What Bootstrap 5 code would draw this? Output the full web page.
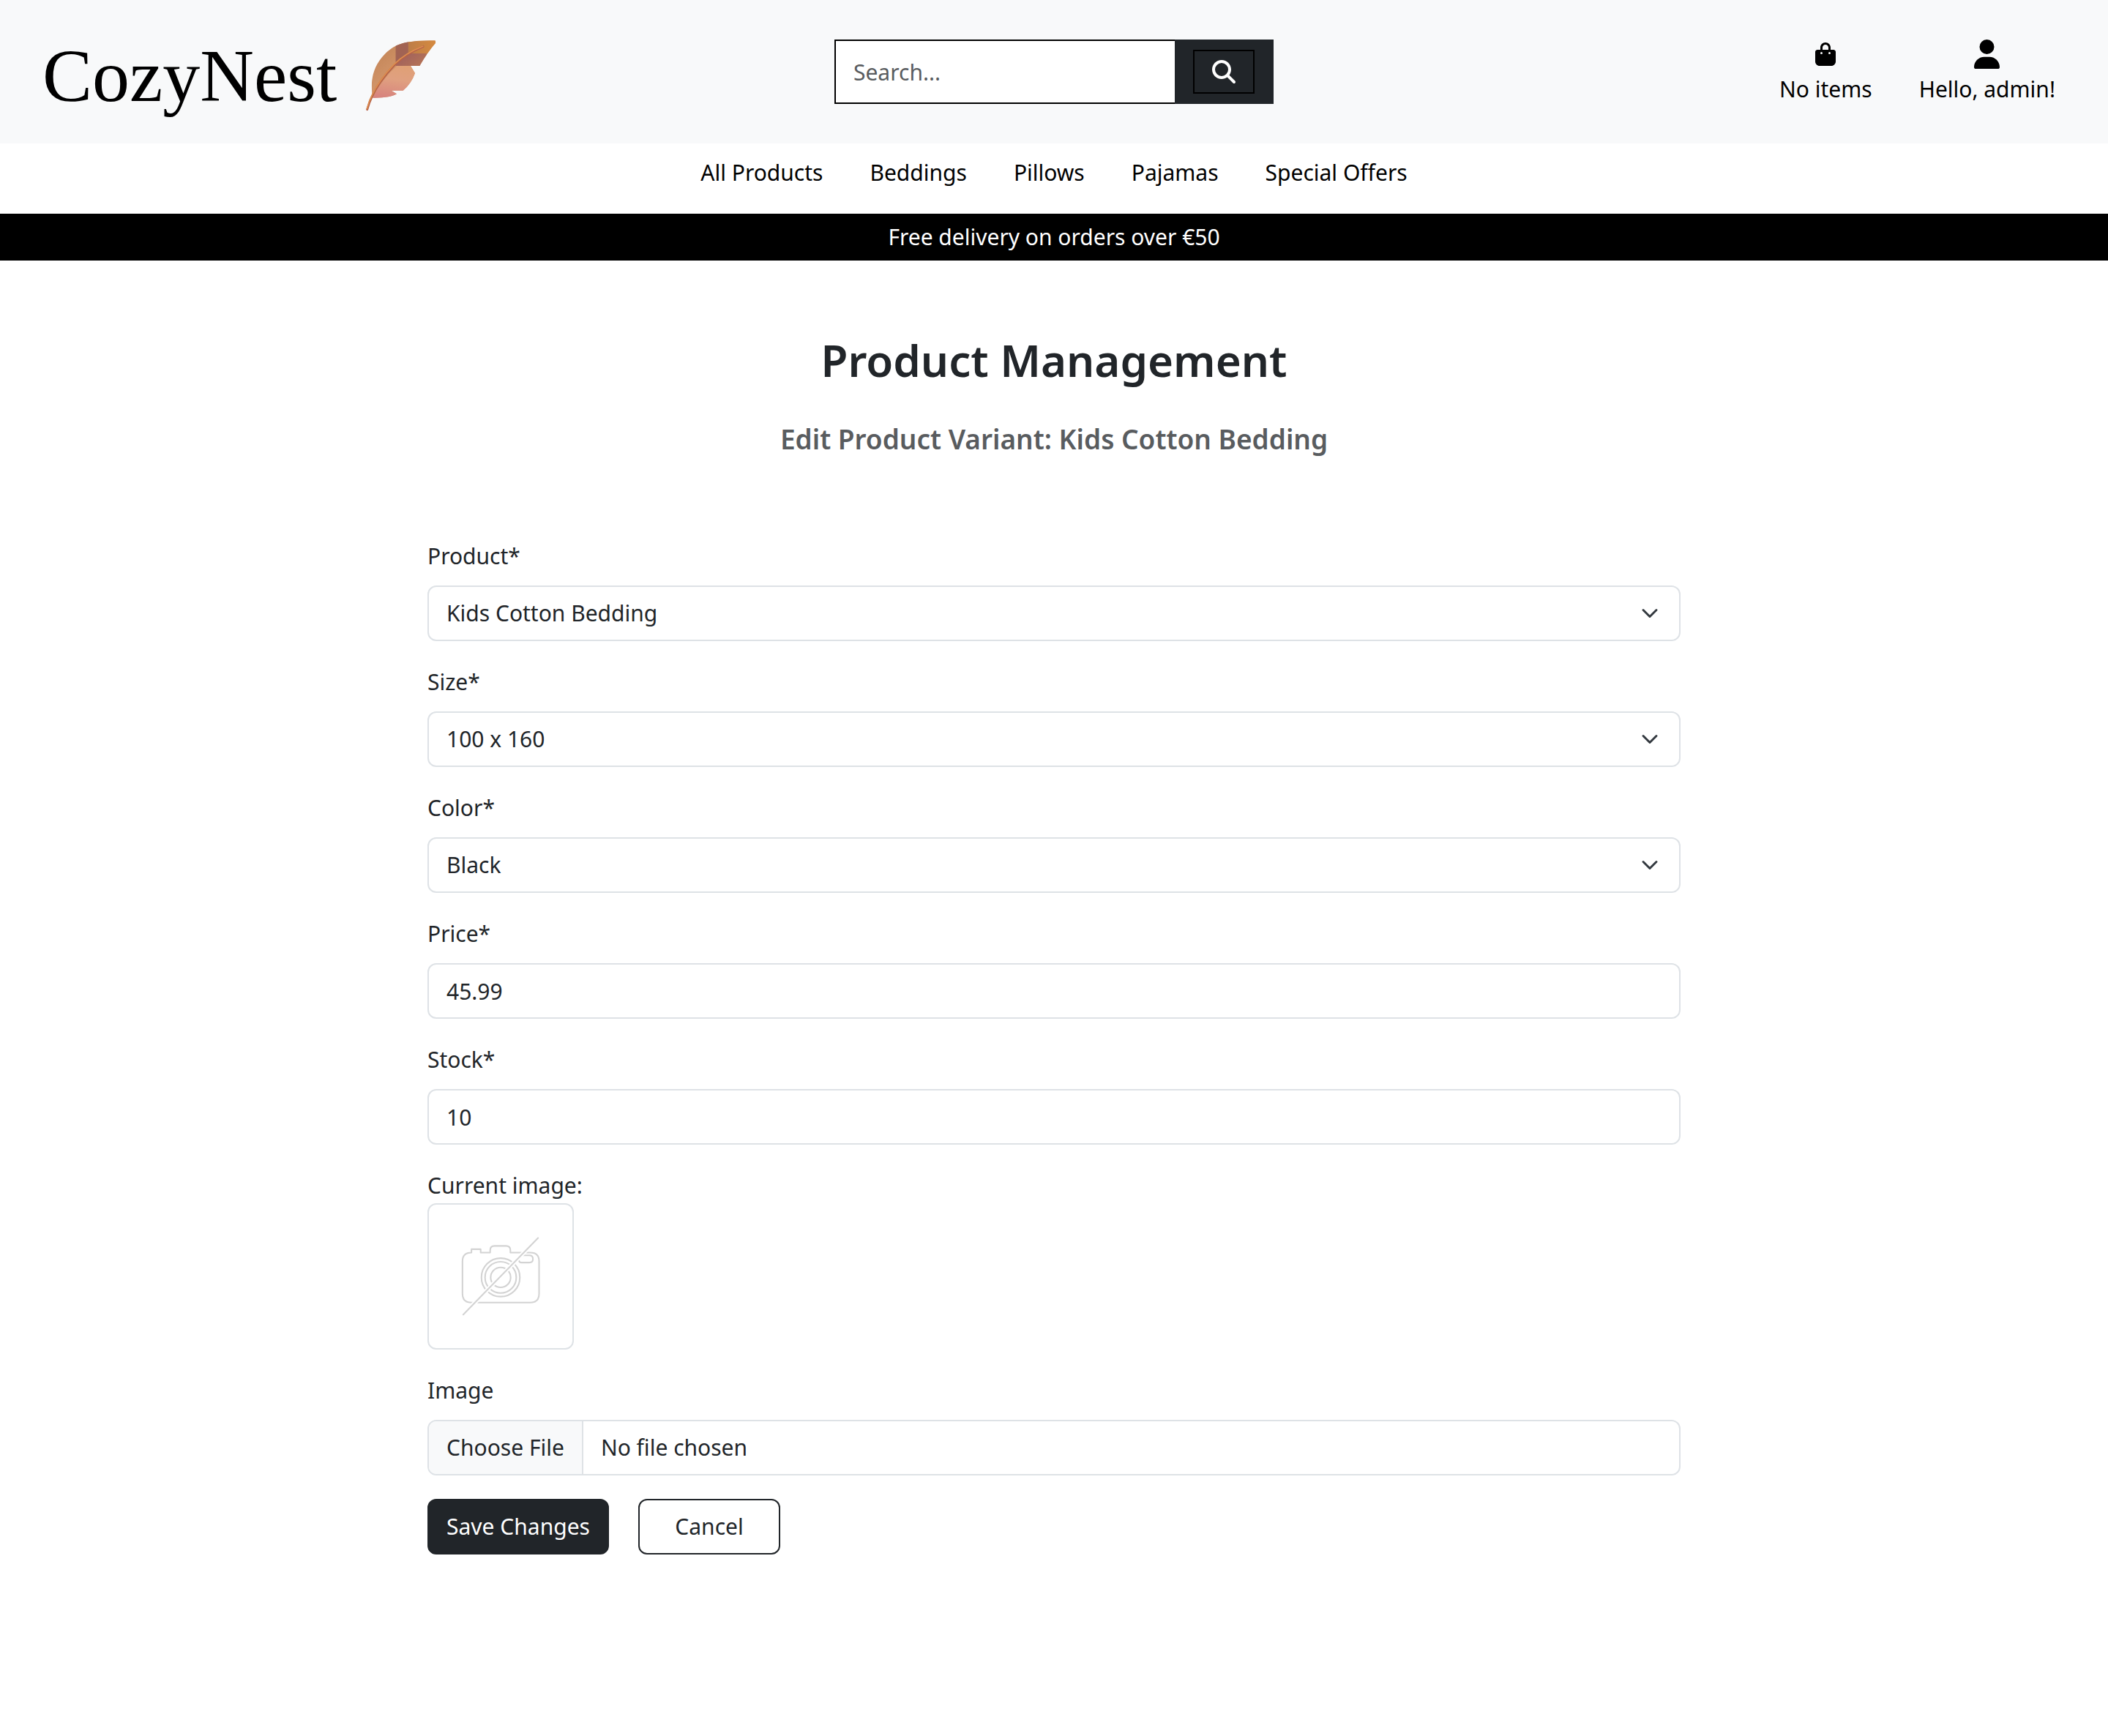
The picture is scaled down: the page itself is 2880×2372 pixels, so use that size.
<!DOCTYPE html>
<html lang="en">
<head>
<meta charset="utf-8">
<meta name="viewport" content="width=device-width, initial-scale=1">
<title>CozyNest - Product Management</title>
<link href="https://cdn.jsdelivr.net/npm/bootstrap@5.3.0/dist/css/bootstrap.min.css" rel="stylesheet">
<style>
:root { font-size: 32px; }
body { font-family: "Noto Sans", "Open Sans", sans-serif; font-size: 30px; line-height: 48px; color: #212529; background: #fff; }
.site-header { min-height: 196px; padding: 0 58px; }
.brand { font-family: "Liberation Serif", serif; font-size: 102px; line-height: 120px; color: #000; padding-top: 12px; gap: 20px; }
.brand svg { width: 130px; height: 130px; }
.search-box { width: 600px; }
.search-box .form-control { height: 88px; border: 2px solid #000; border-right: 0; border-radius: 0; padding: 0 24px; font-size: 30px; }
.search-box .form-control::placeholder { color: #595c5f; }
.search-box .input-group-text { width: 136px; border: 0; border-radius: 0; background: #212529; padding: 0; }
.search-btn { width: 84px; height: 60px; padding: 0; border: 2px solid #000; border-radius: 0; color: #fff; line-height: 0; }
.search-btn svg { width: 32px; height: 32px; }
.tool-link { color: #000; text-decoration: none; text-align: center; }
.tool-icon { height: 48px; }
.tool-gap { gap: 64px; padding-right: 14px; }
.main-nav { height: 96px; padding-top: 16px; gap: 64px; }
.main-nav a { color: #000; text-decoration: none; }
.banner { background: #000; color: #fff; padding: 8px 0; }
.page-wrap { max-width: 2640px; padding-top: 96px; }
.page-wrap h2 { font-size: 60px; line-height: 80px; font-weight: 600; margin-bottom: 44px; }
.page-wrap h5 { font-size: 37px; line-height: 48px; font-weight: 600; color: #595c5f; margin-bottom: 112px; }
.form-label { margin-bottom: 16px; display: block; }
.field { margin-bottom: 32px; }
.field .form-control, .field .form-select { font-size: 30px; line-height: 48px; border-width: 2px; height: 76px; }
.field .form-select { background-size: 32px 24px; }
.field .form-control::file-selector-button { border-right: 2px solid #dee2e6; background: #f8f9fa; }
.thumb { width: 200px; height: 200px; border: 2px solid #dee2e6; border-radius: 12px; display: block; }
.form-actions { gap: 40px; }
.btn-form { font-size: 30px; line-height: 48px; border-width: 2px; border-radius: 12px; }
.btn-save { min-width: 248px; }
.btn-cancel { min-width: 194px; }
</style>
</head>
<body>
<header class="site-header bg-light row gx-0 align-items-center">
  <div class="col-4">
    <a href="#" class="brand d-flex align-items-center text-decoration-none">
      <span>CozyNest</span>
      <svg viewBox="0 0 390 390" aria-hidden="true">
        <defs>
          <linearGradient id="vane" x1="0" y1="0" x2="1" y2="1"><stop offset="0" stop-color="#b97a4b"/><stop offset=".5" stop-color="#d3966b"/><stop offset="1" stop-color="#dd9c80"/></linearGradient>
          <linearGradient id="lower" x1=".6" y1="0" x2=".45" y2="1"><stop offset="0" stop-color="#dfa070"/><stop offset=".5" stop-color="#e0a080"/><stop offset="1" stop-color="#d67f7e"/></linearGradient>
          <linearGradient id="tip" x1="0" y1="0" x2="1" y2="0"><stop offset="0" stop-color="#bd7d47"/><stop offset="1" stop-color="#d68a3f"/></linearGradient>
          <linearGradient id="plum" x1="0" y1="0" x2="1" y2="1"><stop offset="0" stop-color="#a86a50"/><stop offset=".5" stop-color="#a5655b"/><stop offset="1" stop-color="#b77656"/></linearGradient>
          <clipPath id="outline"><path d="M88 284C75 220 88 154 137 105C181 61 226 49 343 49Q347 54 344 61Q314 95 280 153H243L261 183Q246 226 212 254H164L186 268Q160 285 88 284Z"/></clipPath>
        </defs>
        <g clip-path="url(#outline)">
          <path d="M60 30H360V300H60Z" fill="url(#vane)"/>
          <path d="M88 284Q126 205 190 150L230 122L280 120V300H88Z" fill="url(#lower)"/>
          <path d="M232 40H350V103H232Z" fill="url(#tip)"/>
          <path d="M182 50H233V102H310V153H182Z" fill="url(#plum)"/>
          <path d="M182 50H233V102L182 140Z" fill="#9e6051" opacity=".6"/>
        </g>
        <path d="M65 332Q89 240 177 149Q223 103 294 74" fill="none" stroke="#b56249" stroke-width="9" stroke-linecap="round"/>
        <path d="M64 329Q87 239 175 147Q221 101 293 73" fill="none" stroke="#df8f4f" stroke-width="5" stroke-linecap="round"/>
      </svg>
    </a>
  </div>
  <div class="col-4 d-flex justify-content-center">
    <form class="search-box input-group">
      <input type="search" class="form-control" placeholder="Search..." aria-label="Search">
      <span class="input-group-text justify-content-center">
        <button type="button" class="btn search-btn" aria-label="Submit search">
          <svg viewBox="0 0 512 512" fill="currentColor"><path d="M416 208c0 45.900-14.900 88.300-40 122.700L502.600 457.400c12.500 12.500 12.500 32.800 0 45.300s-32.800 12.500-45.300 0L330.700 376c-34.400 25.200-76.800 40-122.700 40C93.100 416 0 322.900 0 208S93.100 0 208 0S416 93.100 416 208zM208 352a144 144 0 1 0 0-288 144 144 0 1 0 0 288z"/></svg>
        </button>
      </span>
    </form>
  </div>
  <div class="col-4 d-flex justify-content-end tool-gap">
    <a href="#" class="tool-link">
      <span class="tool-icon d-flex align-items-center justify-content-center"><svg width="28" height="32" viewBox="0 0 448 512"><path d="M160 112c0-35.300 28.700-64 64-64s64 28.700 64 64v48H160V112zm-48 48H48c-26.500 0-48 21.500-48 48V416c0 53 43 96 96 96H352c53 0 96-43 96-96V208c0-26.500-21.500-48-48-48H336V112C336 50.100 285.900 0 224 0S112 50.100 112 112v48zm24 48a24 24 0 1 1 0 48 24 24 0 1 1 0-48zm152 24a24 24 0 1 1 48 0 24 24 0 1 1-48 0z"/></svg></span>
      <span class="d-block">No items</span>
    </a>
    <a href="#" class="tool-link">
      <span class="tool-icon d-flex align-items-center justify-content-center"><svg width="35" height="40" viewBox="0 0 448 512"><path d="M224 256A128 128 0 1 0 224 0a128 128 0 1 0 0 256zm-45.700 48C79.800 304 0 383.800 0 482.300C0 498.700 13.300 512 29.700 512H418.300c16.400 0 29.700-13.300 29.700-29.700C448 383.800 368.200 304 269.700 304H178.300z"/></svg></span>
      <span class="d-block">Hello, admin!</span>
    </a>
  </div>
</header>
<nav class="main-nav d-flex justify-content-center" aria-label="Shop">
  <a href="#">All Products</a>
  <a href="#">Beddings</a>
  <a href="#">Pillows</a>
  <a href="#">Pajamas</a>
  <a href="#">Special Offers</a>
</nav>
<div class="banner text-center">Free delivery on orders over €50</div>
<main class="page-wrap container-fluid">
  <h2 class="text-center">Product Management</h2>
  <h5 class="text-center">Edit Product Variant: Kids Cotton Bedding</h5>
  <div class="row justify-content-center">
    <form class="col-8">
      <div class="field">
        <label class="form-label" for="product">Product*</label>
        <select class="form-select" id="product"><option>Kids Cotton Bedding</option></select>
      </div>
      <div class="field">
        <label class="form-label" for="size">Size*</label>
        <select class="form-select" id="size"><option>100 x 160</option></select>
      </div>
      <div class="field">
        <label class="form-label" for="color">Color*</label>
        <select class="form-select" id="color"><option>Black</option></select>
      </div>
      <div class="field">
        <label class="form-label" for="price">Price*</label>
        <input class="form-control" id="price" type="number" step="0.01" value="45.99">
      </div>
      <div class="field">
        <label class="form-label" for="stock">Stock*</label>
        <input class="form-control" id="stock" type="number" value="10">
      </div>
      <div class="field">
        <div>Current image:</div>
        <svg class="thumb" viewBox="0 0 560 560" role="img" aria-label="No image available">
          <g fill="none" stroke="#d3d3d3" stroke-width="6" stroke-linejoin="round">
            <path d="M166 187V174H202V187H239V178Q239 161 256 161H301Q318 161 318 178V187H396Q430 187 430 221V348Q430 382 396 382H165Q131 382 131 348V221Q131 187 166 187Z"/>
            <circle cx="280" cy="284" r="75"/>
            <circle cx="280" cy="284" r="61"/>
            <circle cx="280" cy="284" r="39"/>
            <path d="M366 198H392Q406 198 406 212Q406 226 392 226H362Q351 226 351 214"/>
            <path d="M134 429L426 130" stroke="#fff" stroke-width="17"/>
            <path d="M134 429L426 130" stroke-linecap="round"/>
          </g>
        </svg>
      </div>
      <div class="field">
        <label class="form-label" for="image">Image</label>
        <input class="form-control" id="image" type="file">
      </div>
      <div class="form-actions d-flex">
        <button type="submit" class="btn btn-dark btn-form btn-save">Save Changes</button>
        <a href="#" class="btn btn-outline-dark btn-form btn-cancel">Cancel</a>
      </div>
    </form>
  </div>
</main>
<script src="https://cdn.jsdelivr.net/npm/bootstrap@5.3.0/dist/js/bootstrap.bundle.min.js"></script>
</body>
</html>
